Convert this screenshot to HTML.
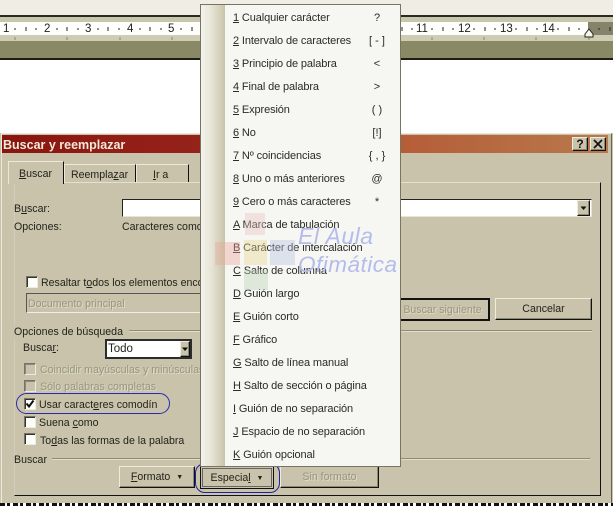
<!DOCTYPE html>
<html><head><meta charset="utf-8"><style>
html,body{margin:0;padding:0}
body{width:613px;height:506px;overflow:hidden;position:relative;background:#c8c3aa;font-family:"Liberation Sans",sans-serif;font-size:10.6px;color:#23231c}
div,span.a{position:absolute;white-space:nowrap}
.b{position:absolute;box-sizing:border-box}
.t{line-height:14px;height:14px;margin-top:1px}
.dis{color:#99957f;text-shadow:1px 1px 0 #dedbc8}
.cb{position:absolute;width:12px;height:12px;box-sizing:border-box;background:#fdfdf9;border:1px solid;border-color:#77745f #eeeade #eeeade #77745f;box-shadow:inset 1px 1px 0 #333}
.cb.d{background:#c8c3aa;box-shadow:inset 1px 1px 0 #888}
.btn{position:absolute;box-sizing:border-box;background:#c8c3aa;border:1px solid;border-color:#efecdc #111 #111 #efecdc;text-align:center;line-height:21px;box-shadow:inset -1px -1px 0 #8b8873}
.m{left:233px;line-height:14px;height:14px;font-size:11px;letter-spacing:-.12px;color:#2a2a26;margin-top:1px}
.k{line-height:14px;height:14px;font-size:11px;color:#2a2a26;text-align:center;width:24px;left:365px;margin-top:1px}
</style></head><body>
<!-- top word area -->
<div style="left:0;top:0;width:613px;height:16px;background:#f0eee4"></div>
<div style="left:0;top:15px;width:613px;height:2px;background:#2a2a22"></div>
<div style="left:0;top:17px;width:613px;height:5px;background:#c9c6ae"></div>
<div style="left:0;top:22px;width:588px;height:13px;background:#fefefc"></div>
<div style="left:588px;top:22px;width:25px;height:13px;background:#85846a"></div>
<div style="left:0;top:35px;width:613px;height:6px;background:#cfccb4"></div>
<div style="left:0;top:41px;width:613px;height:17px;background:#8a8966"></div>
<div style="left:0;top:58px;width:613px;height:2px;background:#1c1c16"></div>
<div style="left:0;top:60px;width:613px;height:73px;background:#fff"></div>
<!-- ruler numbers -->
<div class="t" style="left:3px;top:21px;font-size:11.5px">1</div>
<div class="t" style="left:44px;top:21px;font-size:11.5px">2</div>
<div class="t" style="left:85px;top:21px;font-size:11.5px">3</div>
<div class="t" style="left:127px;top:21px;font-size:11.5px">4</div>
<div class="t" style="left:168px;top:21px;font-size:11.5px">5</div>
<div class="t" style="left:416px;top:21px;font-size:11.5px">11</div>
<div class="t" style="left:458px;top:21px;font-size:11.5px">12</div>
<div class="t" style="left:500px;top:21px;font-size:11.5px">13</div>
<div class="t" style="left:542px;top:21px;font-size:11.5px">14</div>
<svg style="position:absolute;left:0;top:22px" width="613" height="20">
<g stroke="#222" stroke-width="1">
<path d="M15 6v2M26 5v4M36 6v2M57 6v2M67 5v4M78 6v2M98 6v2M108 5v4M119 6v2M140 6v2M150 5v4M161 6v2M181 6v2M192 5v4M402 5v4M412 6v2M432 6v2M443 5v4M453 6v2M474 6v2M485 5v4M495 6v2M516 6v2M527 5v4M537 6v2M558 6v2M569 5v4M579 6v2M599 6v2M610 5v4"/>
</g>
<path d="M15 15v3M67 15v3M120 15v3M172 15v3M432 15v3M484 15v3M536 15v3M589 15v3" stroke="#8a8870"/>
<path d="M585 12l4-5 4 5v3h-8z" fill="#f6f5ea" stroke="#222"/>
</svg>
<!-- dialog -->
<div style="left:1px;top:133px;width:609px;height:370px;background:#c8c3aa;border-top:1px solid #ece9d8;border-left:1px solid #ece9d8;border-right:1px solid #66644f"></div>
<div style="left:2px;top:135px;width:606px;height:18px;background:linear-gradient(90deg,#8a1510 0,#96231a 33%,#b55a35 62%,#b8794c 100%)"></div>
<div style="left:3px;top:137px;line-height:16px;font-weight:bold;font-size:12.5px;color:#f2ead8">Buscar y reemplazar</div>
<div class="btn" style="left:572px;top:137px;width:16px;height:14px;line-height:12px;font-weight:bold;font-size:12px;color:#111;border-width:1px">?</div>
<div class="btn" style="left:590px;top:137px;width:16px;height:14px"></div>
<svg style="position:absolute;left:590px;top:137px" width="16" height="14"><path d="M4 3l8 8M12 3l-8 8" stroke="#111" stroke-width="1.7"/></svg>
<!-- tab panel -->
<div class="b" style="left:14px;top:182px;width:587px;height:314px;border:1px solid;border-color:#e4e1cf #111 #111 #d2cfb9"></div>
<div class="b" style="left:8px;top:161px;width:56px;height:23px;background:#c8c3aa;border:1px solid;border-color:#ece9d8 #111 #c8c3aa #ece9d8;border-bottom:0"></div>
<div class="b" style="left:64px;top:164px;width:72px;height:18px;border:1px solid;border-color:#ece9d8 #111 #c8c3aa #ece9d8;border-bottom:0"></div>
<div class="b" style="left:136px;top:164px;width:53px;height:18px;border:1px solid;border-color:#ece9d8 #111 #c8c3aa #ece9d8;border-bottom:0"></div>
<div class="t" style="left:19px;top:166px"><u>B</u>uscar</div>
<div class="t" style="left:71px;top:167px">Reempla<u>z</u>ar</div>
<div class="t" style="left:153px;top:167px"><u>I</u>r a</div>
<div class="t" style="left:14px;top:201px">B<u>u</u>scar:</div>
<div class="t" style="left:14px;top:219px">Opciones:</div>
<div class="t" style="left:122px;top:219px">Caracteres comodín</div>
<div class="b" style="left:122px;top:199px;width:470px;height:18px;background:#fff;border:1px solid;border-color:#222 #e7e4d4 #e7e4d4 #222"></div>
<div class="btn" style="left:577px;top:200px;width:13px;height:16px"></div>
<svg style="position:absolute;left:577px;top:200px" width="13" height="16"><path d="M3.5 6.5h6l-3 3.5z" fill="#111"/></svg>
<div class="cb" style="left:26px;top:276px"></div>
<div class="t" style="left:41px;top:275px">Resaltar t<u>o</u>dos los elementos encontrados en:</div>
<div class="b" style="left:26px;top:293px;width:190px;height:20px;background:#c8c3aa;border:1px solid;border-color:#555 #eee #eee #555"></div>
<div class="t dis" style="left:28px;top:296px">Documento principal</div>
<div class="btn dis" style="left:395px;top:298px;width:95px;height:23px;border-width:2px;line-height:20px;border-color:#111;box-shadow:none">Buscar siguiente</div>
<div class="btn" style="left:495px;top:298px;width:97px;height:22px">Cancelar</div>
<div style="left:218px;top:330px;width:374px;height:1px;background:#8f8c74;box-shadow:0 1px 0 #e0ddcc"></div>
<div style="left:126px;top:330px;width:90px;height:1px;background:#8f8c74;box-shadow:0 1px 0 #e0ddcc"></div>
<div class="t" style="left:14px;top:324px;background:#c8c3aa;padding-right:6px">Opciones de búsqueda</div>
<div class="t" style="left:23px;top:340px">Busca<u>r</u>:</div>
<div class="b" style="left:105px;top:339px;width:87px;height:20px;background:#fff;border:2px solid #2c2c28"></div>
<div class="t" style="left:108px;top:341px;font-size:11.5px">Todo</div>
<div class="btn" style="left:180px;top:341px;width:10px;height:16px"></div>
<svg style="position:absolute;left:180px;top:341px" width="10" height="16"><path d="M2 6.5h6l-3 3.5z" fill="#111"/></svg>
<div class="cb d" style="left:24px;top:363px"></div>
<div class="t dis" style="left:40px;top:362px;width:160px;overflow:hidden">Coincidir mayúsculas y minúsculas</div>
<div class="cb d" style="left:24px;top:380px"></div>
<div class="t dis" style="left:40px;top:379px">Sólo palabras completas</div>
<div class="cb" style="left:24px;top:398px"></div>
<svg style="position:absolute;left:24px;top:398px" width="12" height="12"><path d="M2.5 5.5l2.5 3 4.5-6" fill="none" stroke="#111" stroke-width="2"/></svg>
<div class="t" style="left:39px;top:397px">Usar caract<u>e</u>res comodín</div>
<div class="b" style="left:16px;top:393px;width:154px;height:21px;border:1px solid #2a2ab0;border-radius:11px"></div>
<div class="cb" style="left:24px;top:416px"></div>
<div class="t" style="left:39px;top:415px">Suena <u>c</u>omo</div>
<div class="cb" style="left:24px;top:433px"></div>
<div class="t" style="left:40px;top:433px">To<u>d</u>as las formas de la palabra</div>
<div class="t" style="left:14px;top:452px">Buscar</div>
<div style="left:52px;top:458px;width:538px;height:1px;background:#8f8c74;box-shadow:0 1px 0 #e0ddcc"></div>
<div class="btn" style="left:119px;top:466px;width:76px;height:22px;border-right-color:#111"><u>F</u>ormato &nbsp;<span style="font-size:7px;vertical-align:1px">▼</span></div>
<div class="btn" style="left:200px;top:466px;width:74px;height:23px;border:1px solid #111;outline:none;box-shadow:inset 0 0 0 1px #c8c3aa,inset 0 0 0 2px #666;line-height:23px">Especia<u>l</u> &nbsp;<span style="font-size:7px;vertical-align:1px">▼</span></div>
<div class="b" style="left:195px;top:463px;width:85px;height:30px;border:1px solid #1f1fa8;border-radius:10px"></div>
<div class="btn dis" style="left:280px;top:466px;width:99px;height:22px;border-color:#efecdc #111 #111 #efecdc">Sin formato</div>
<!-- bottom strip -->
<div style="left:0;top:503px;width:613px;height:3px;background:repeating-linear-gradient(90deg,#111 0 5px,#f4f4f0 5px 7px,#111 7px 10px,#fff 10px 13px)"></div>
<!-- menu -->
<div class="b" style="left:200px;top:4px;width:201px;height:463px;background:#f6f6f3;border:1px solid #77755f"></div>
<div style="left:201px;top:5px;width:24px;height:461px;background:linear-gradient(90deg,#f3f2ec 0,#e8e6d8 40%,#c8c4aa 100%)"></div>
<div class="m" style="top:10px"><u>1</u> Cualquier carácter</div><div class="k" style="top:10px">?</div>
<div class="m" style="top:33px"><u>2</u> Intervalo de caracteres</div><div class="k" style="top:33px">[ - ]</div>
<div class="m" style="top:56px"><u>3</u> Principio de palabra</div><div class="k" style="top:56px">&lt;</div>
<div class="m" style="top:79px"><u>4</u> Final de palabra</div><div class="k" style="top:79px">&gt;</div>
<div class="m" style="top:102px"><u>5</u> Expresión</div><div class="k" style="top:102px">( )</div>
<div class="m" style="top:125px"><u>6</u> No</div><div class="k" style="top:125px">[!]</div>
<div class="m" style="top:148px"><u>7</u> Nº coincidencias</div><div class="k" style="top:148px">{ , }</div>
<div class="m" style="top:171px"><u>8</u> Uno o más anteriores</div><div class="k" style="top:171px">@</div>
<div class="m" style="top:194px"><u>9</u> Cero o más caracteres</div><div class="k" style="top:194px">*</div>
<div class="m" style="top:217px"><u>A</u> Marca de tabulación</div>
<div class="m" style="top:240px"><u>B</u> Carácter de intercalación</div>
<div class="m" style="top:263px"><u>C</u> Salto de columna</div>
<div class="m" style="top:286px"><u>D</u> Guión largo</div>
<div class="m" style="top:309px"><u>E</u> Guión corto</div>
<div class="m" style="top:332px"><u>F</u> Gráfico</div>
<div class="m" style="top:355px"><u>G</u> Salto de línea manual</div>
<div class="m" style="top:378px"><u>H</u> Salto de sección o página</div>
<div class="m" style="top:401px"><u>I</u> Guión de no separación</div>
<div class="m" style="top:424px"><u>J</u> Espacio de no separación</div>
<div class="m" style="top:447px"><u>K</u> Guión opcional</div>
<!-- watermark -->
<svg style="position:absolute;left:214px;top:212px;opacity:.4" width="84" height="80">
<rect x="31" y="1" width="20" height="22" fill="#e8c0c0"/>
<rect x="1" y="30" width="25" height="23" fill="#e8a898"/>
<rect x="30" y="28" width="23" height="25" fill="#e8d890"/>
<rect x="56" y="28" width="25" height="25" fill="#b8c4e0"/>
<rect x="30" y="58" width="24" height="20" fill="#b8d4b8"/>
</svg>
<div style="left:298px;top:224px;font-style:italic;font-size:23px;line-height:24px;color:#b4bcec;letter-spacing:.5px">El Aula</div>
<div style="left:298px;top:252px;font-style:italic;font-size:22.5px;line-height:26px;color:#b4bcec;letter-spacing:.5px">Ofimática</div>
</body></html>
